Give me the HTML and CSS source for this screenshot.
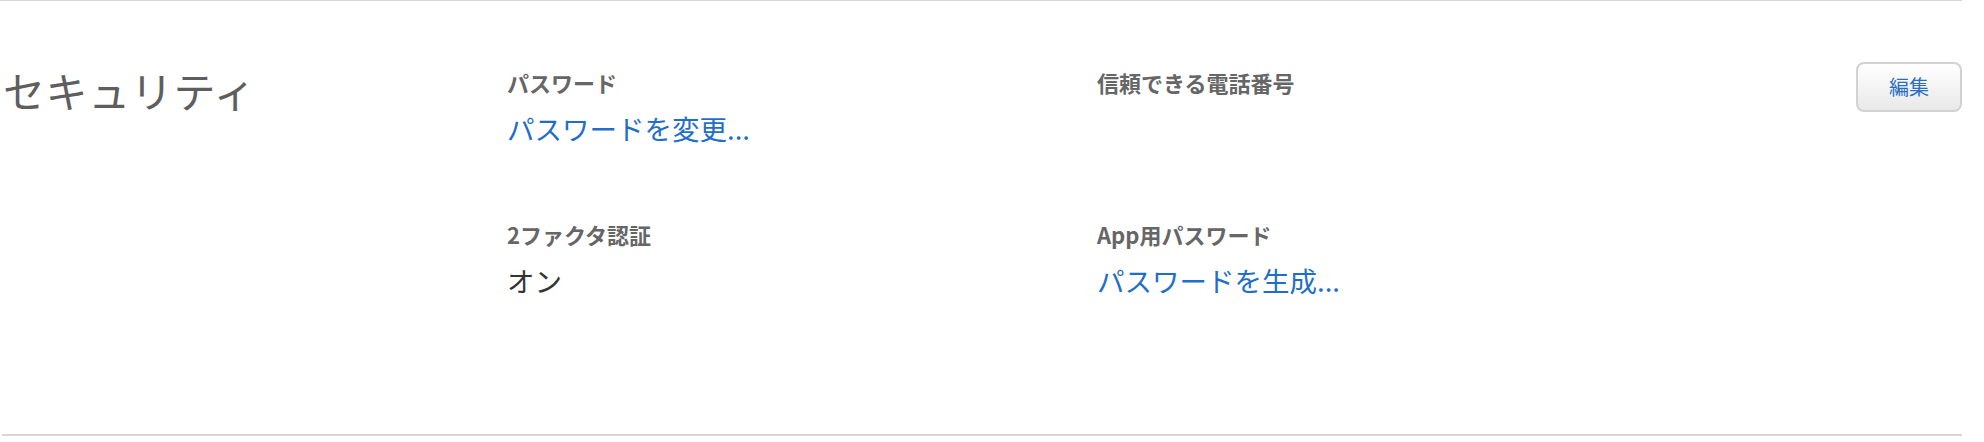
FILE: index.html
```html
<!DOCTYPE html>
<html lang="ja">
<head>
<meta charset="utf-8">
<title>セキュリティ</title>
<link rel="stylesheet" href="styles.css">
</head>
<body>
<div class="page">
  <section class="security">
    <h2 class="sec-title">セキュリティ</h2>
    <div class="fields">
      <div class="field">
        <div class="label">パスワード</div>
        <a class="value link" href="#">パスワードを変更...</a>
      </div>
      <div class="field">
        <div class="label">信頼できる電話番号</div>
      </div>
      <div class="field">
        <div class="label">2ファクタ認証</div>
        <div class="value">オン</div>
      </div>
      <div class="field">
        <div class="label">App用パスワード</div>
        <a class="value link" href="#">パスワードを生成...</a>
      </div>
    </div>
    <button class="edit" type="button">編集</button>
  </section>
</div>
</body>
</html>
```

FILE: styles.css
```css
html, body {
  margin: 0;
  padding: 0;
  background: #fff;
}
body {
  font-family: "Noto Sans CJK JP", "Noto Sans", sans-serif;
}
.page {
  width: 1962px;
  border-top: 1px solid #d6d6d6;
}
.security {
  margin-left: 2px;
  box-sizing: border-box;
  height: 435px;
  border-bottom: 2px solid #d6d6d6;
  display: flex;
  align-items: flex-start;
  padding: 61px 0 0 1px;
}
.sec-title {
  margin: 0;
  width: 504px;
  flex: none;
  font-size: 42px;
  line-height: 50px;
  font-weight: 400;
  color: #5e5e5e;
  padding-top: 3px;
  letter-spacing: 0.6px;
}
.fields {
  flex: 1;
  display: grid;
  grid-template-columns: 590px 1fr;
  row-gap: 70px;
  padding-top: 7px;
}
.field {
  display: flex;
  flex-direction: column;
  min-height: 82px;
}
.label {
  font-size: 22px;
  line-height: 26px;
  font-weight: 700;
  color: #666;
}
.value {
  margin-top: 17px;
  font-size: 27.5px;
  line-height: 32px;
  color: #333;
  text-decoration: none;
}
.link {
  color: #1f6ec8;
}
.edit {
  flex: none;
  width: 106px;
  height: 50px;
  margin: 0;
  padding: 0;
  box-sizing: border-box;
  border: 2px solid #d2d2d2;
  border-radius: 8px;
  background: linear-gradient(#ffffff, #e9e9e9);
  color: #2a6fc4;
  font-family: "Noto Sans CJK JP", sans-serif;
  font-size: 20px;
  line-height: 46px;
}
```
